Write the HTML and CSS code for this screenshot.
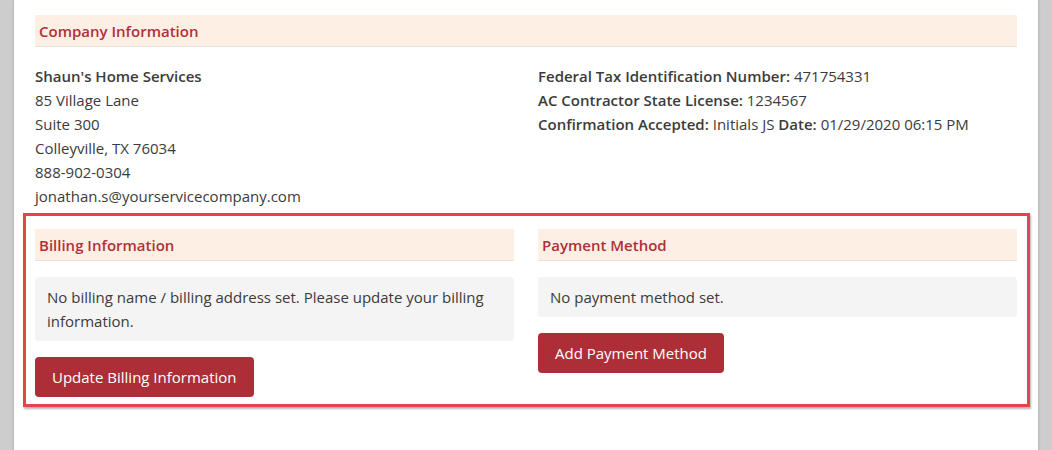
FILE: index.html
```html
<!DOCTYPE html>
<html lang="en">
<head>
    <meta charset="UTF-8">
    <meta name="viewport" content="width=device-width, initial-scale=1.0">
    <title>Company Information</title>
    <link rel="stylesheet" href="styles.css">
</head>
<body>
    <div class="page">
        <div class="section-title">Company Information</div>

        <div class="info">
            <div class="info-col">
                <div><b>Shaun's Home Services</b></div>
                <div>85 Village Lane</div>
                <div>Suite 300</div>
                <div>Colleyville, TX 76034</div>
                <div>888-902-0304</div>
                <div>jonathan.s@yourservicecompany.com</div>
            </div>
            <div class="info-col">
                <div><b>Federal Tax Identification Number:</b> 471754331</div>
                <div><b>AC Contractor State License:</b> 1234567</div>
                <div><b>Confirmation Accepted:</b> Initials JS <b>Date:</b> 01/29/2020 06:15 PM</div>
            </div>
        </div>

        <div class="highlight">
            <div class="pay-col">
                <div class="section-title">Billing Information</div>
                <div class="notice">No billing name / billing address set. Please update your billing information.</div>
                <button class="btn">Update Billing Information</button>
            </div>
            <div class="pay-col">
                <div class="section-title">Payment Method</div>
                <div class="notice">No payment method set.</div>
                <button class="btn">Add Payment Method</button>
            </div>
        </div>
    </div>
</body>
</html>
```

FILE: styles.css
```css
html, body {
    height: 100%;
}
body {
    margin: 0;
    background-color: #cdcdcd;
    font-family: 'Open Sans', 'Noto Sans', sans-serif;
    font-size: 15px;
    color: #3b3b3b;
    overflow: hidden;
}
.page {
    width: 982px;
    min-height: 100%;
    margin-left: 14px;
    padding: 15px 21px 0 21px;
    background-color: white;
    box-shadow: 0 0 3px rgba(0, 0, 0, 0.2);
}
.section-title {
    height: 31px;
    line-height: 32px;
    padding: 0 4px;
    background-color: #fdefe3;
    border-bottom: 1px solid #e6e2de;
    color: #b0303a;
    font-size: 15px;
    font-weight: 600;
}
.info {
    display: grid;
    grid-template-columns: 1fr 1fr;
    column-gap: 24px;
    margin-top: 17px;
    line-height: 24px;
}
b {
    font-weight: 600;
}
.highlight {
    display: grid;
    grid-template-columns: 1fr 1fr;
    column-gap: 24px;
    margin: 5px -13px 0 -12px;
    padding: 13px 10px 7px 9px;
    border: 3px solid #e2454c;
    box-shadow: 1px 2px 2px rgba(0, 0, 0, 0.3);
}
.pay-col {
    display: flex;
    flex-direction: column;
    align-items: flex-start;
}
.pay-col .section-title {
    align-self: stretch;
}
.notice {
    align-self: stretch;
    margin-top: 16px;
    padding: 8px 12px;
    background-color: #f4f4f4;
    border-radius: 4px;
    line-height: 24px;
}
.btn {
    margin-top: 16px;
    height: 40px;
    padding: 0 17px;
    border: none;
    border-radius: 4px;
    background-color: #ae2e37;
    color: white;
    font-family: 'Open Sans', 'Noto Sans', sans-serif;
    font-size: 15px;
    cursor: pointer;
}
```
